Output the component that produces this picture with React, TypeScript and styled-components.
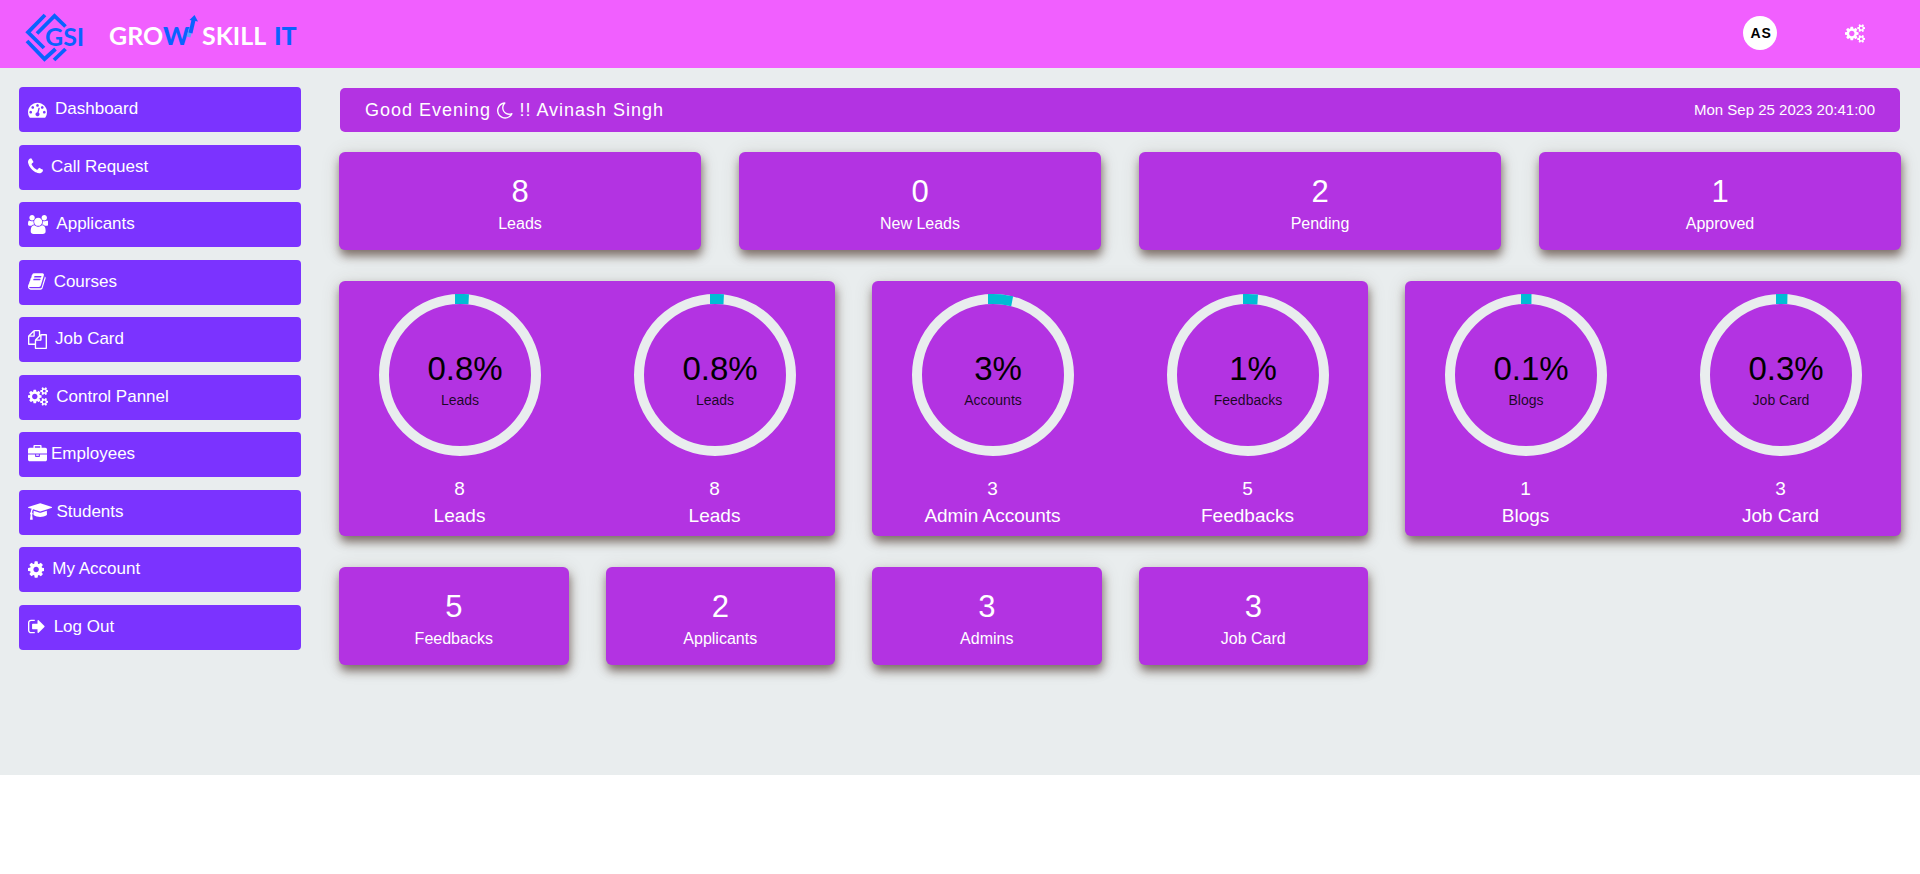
import React from "react";
import styled, { createGlobalStyle } from "styled-components";

const GlobalStyle = createGlobalStyle`
  * { box-sizing: border-box; }
  body {
    margin: 0;
    background: #fff;
    font-family: "Liberation Sans", Arial, sans-serif;
    color: #fff;
  }
`;

const glyphs = {
  dashboard: {
    box: "0 0 1792 1792",
    d: "M384 1152q0-53-37.5-90.5t-90.5-37.5-90.5 37.5-37.5 90.5 37.5 90.5 90.5 37.5 90.5-37.5 37.5-90.5zm192-448q0-53-37.5-90.5t-90.5-37.5-90.5 37.5-37.5 90.5 37.5 90.5 90.5 37.5 90.5-37.5 37.5-90.5zm428 481l101-382q6-26-7.5-48.5t-38.5-29.5-48 6.5-30 39.5l-101 382q-60 5-107 43.5t-63 98.5q-20 77 20 146t117 89 146-20 89-117q16-60-6-117t-72-91zm660-33q0-53-37.5-90.5t-90.5-37.5-90.5 37.5-37.5 90.5 37.5 90.5 90.5 37.5 90.5-37.5 37.5-90.5zm-640-640q0-53-37.5-90.5t-90.5-37.5-90.5 37.5-37.5 90.5 37.5 90.5 90.5 37.5 90.5-37.5 37.5-90.5zm448 192q0-53-37.5-90.5t-90.5-37.5-90.5 37.5-37.5 90.5 37.5 90.5 90.5 37.5 90.5-37.5 37.5-90.5zm320 448q0 261-141 483-19 29-54 29h-1402q-35 0-54-29-141-221-141-483 0-182 71-348t191-286 286-191 348-71 348 71 286 191 191 286 71 348z",
  },
  phone: {
    box: "192 0 1408 1792",
    d: "M1600 1240q0 27-10 70.5t-21 68.5q-21 50-122 106-94 51-186 51-27 0-52.5-3.5t-57.5-12.5-47.5-14.5-55.5-20.5-49-18q-98-35-175-83-128-79-264.5-215.5t-215.5-264.5q-48-77-83-175-3-9-18-49t-20.5-55.5-14.5-47.5-12.5-57.5-3.5-52.5q0-92 51-186 56-101 106-122 25-11 68.5-21t70.5-10q14 0 21 3 18 6 53 76 11 19 30 54t35 63.5 31 53.5q3 4 17.5 25t21.5 35.5 7 28.5q0 20-28.5 50t-62 55-62 53-28.5 46q0 9 5 22.5t8.5 20.5 14 24 11.5 19q76 137 174 235t235 174q2 1 19 11.5t24 14 20.5 8.5 22.5 5q18 0 46-28.5t53-62 55-62 50-28.5q14 0 28.5 7t35.5 21.5 25 17.5q25 15 53.5 31t63.5 35 54 30q70 35 76 53 3 7 3 21z",
  },
  users: {
    box: "0 0 1920 1792",
    d: "M593 896q-162 5-265 128h-134q-82 0-138-40.5t-56-118.5q0-353 124-353 6 0 43.5 21t97.5 42.5 119 21.5q67 0 133-23-5 37-5 66 0 139 81 256zm1071 637q0 120-73 189.5t-194 69.5h-874q-121 0-194-69.5t-73-189.5q0-53 3.5-103.5t14-109 26.5-108.5 43-97.5 62-81 85.5-53.5 111.5-20q10 0 43 21.5t73 48 107 48 135 21.5 135-21.5 107-48 73-48 43-21.5q61 0 111.5 20t85.5 53.5 62 81 43 97.5 26.5 108.5 14 109 3.5 103.5zm-1024-1277q0 106-75 181t-181 75-181-75-75-181 75-181 181-75 181 75 75 181zm704 384q0 159-112.5 271.5t-271.5 112.5-271.5-112.5-112.5-271.5 112.5-271.5 271.5-112.5 271.5 112.5 112.5 271.5zm576 225q0 78-56 118.5t-138 40.5h-134q-103-123-265-128 81-117 81-256 0-29-5-66 66 23 133 23 59 0 119-21.5t97.5-42.5 43.5-21q124 0 124 353zm-128-609q0 106-75 181t-181 75-181-75-75-181 75-181 181-75 181 75 75 181z",
  },
  book: {
    box: "64 0 1664 1792",
    d: "M1703 478q40 57 18 129l-275 906q-19 64-76.5 107.5t-122.5 43.5h-923q-77 0-148.5-53.5t-99.5-131.5q-24-67-2-127 0-4 3-27t4-37q1-8-3-21.5t-3-19.5q2-11 8-21t16.5-23.5 16.5-23.5q23-38 45-91.5t30-91.5q3-10 .5-30t-.5-28q3-11 17-28t17-23q21-36 42-92t25-90q1-9-2.5-32t.5-28q4-13 22-30.5t22-22.5q19-26 42.5-84.5t27.5-96.5q1-8-3-25.5t-2-26.5q2-8 9-18t18-23 17-21q8-12 16.5-30.5t15-35 16-36 19.5-32 26.5-23.5 36-11.5 47.5 5.5l-1 3q38-9 51-9h761q74 0 114 56t18 130l-274 906q-36 119-71.5 153.5t-128.5 34.5h-869q-27 0-38 15-11 16-1 43 24 70 144 70h923q29 0 56-15.5t35-41.5l300-987q7-22 5-57 38 15 59 43zm-1064 2q-4 13 2 22.5t20 9.5h608q13 0 25.5-9.5t16.5-22.5l21-64q4-13-2-22.5t-20-9.5h-608q-13 0-25.5 9.5t-16.5 22.5zm-83 256q-4 13 2 22.5t20 9.5h608q13 0 25.5-9.5t16.5-22.5l21-64q4-13-2-22.5t-20-9.5h-608q-13 0-25.5 9.5t-16.5 22.5z",
  },
  copy: {
    box: "0 0 1792 1792",
    d: "M1696 384q40 0 68 28t28 68v1216q0 40-28 68t-68 28h-960q-40 0-68-28t-28-68v-288h-544q-40 0-68-28t-28-68v-672q0-40 20-88t48-76l408-408q28-28 76-48t88-20h416q40 0 68 28t28 68v328q68-40 128-40h416zm-544 213l-299 299h299v-299zm-640-384l-299 299h299v-299zm196 647l316-316v-416h-384v416q0 40-28 68t-68 28h-416v640h512v-256q0-40 20-88t48-76zm956 804v-1152h-384v416q0 40-28 68t-68 28h-416v640h896z",
  },
  gears: {
    box: "0 0 1920 1792",
    d: "M896 896q0-106-75-181t-181-75-181 75-75 181 75 181 181 75 181-75 75-181zm768 512q0-52-38-90t-90-38-90 38-38 90q0 53 37.5 90.5t90.5 37.5 90.5-37.5 37.5-90.5zm0-1024q0-52-38-90t-90-38-90 38-38 90q0 53 37.5 90.5t90.5 37.5 90.5-37.5 37.5-90.5zm-384 421v185q0 10-7 19.5t-16 10.5l-155 24q-11 35-32 76 34 48 90 115 7 11 7 20 0 12-7 19-23 30-82.5 89.5t-78.5 59.5q-11 0-21-7l-115-90q-37 19-77 31-11 108-23 155-7 24-30 24h-186q-11 0-20-7.5t-10-17.5l-23-153q-34-10-75-31l-118 89q-7 7-20 7-11 0-21-8-144-133-144-160 0-9 7-19 10-14 41-53t47-61q-23-44-35-82l-152-24q-10-1-17-9.5t-7-19.5v-185q0-10 7-19.5t16-10.5l155-24q11-35 32-76-34-48-90-115-7-11-7-20 0-12 7-20 22-30 82-89t79-59q11 0 21 7l115 90q34-18 77-32 11-108 23-154 7-24 30-24h186q11 0 20 7.5t10 17.5l23 153q34 10 75 31l118-89q8-7 20-7 11 0 21 8 144 133 144 160 0 8-7 19-12 16-42 54t-45 60q23 48 34 82l152 23q10 2 17 10.5t7 19.5zm640 533v140q0 16-149 31-12 27-30 52 51 113 51 138 0 4-4 7-122 71-124 71-8 0-46-47t-52-68q-20 2-30 2t-30-2q-14 21-52 68t-46 47q-2 0-124-71-4-3-4-7 0-25 51-138-18-25-30-52-149-15-149-31v-140q0-16 149-31 13-29 30-52-51-113-51-138 0-4 4-7 4-2 35-20t59-34 30-16q8 0 46 46.5t52 67.5q20-2 30-2t30 2q51-71 92-112l6-2q4 0 124 70 4 3 4 7 0 25-51 138 17 23 30 52 149 15 149 31zm0-1024v140q0 16-149 31-12 27-30 52 51 113 51 138 0 4-4 7-122 71-124 71-8 0-46-47t-52-68q-20 2-30 2t-30-2q-14 21-52 68t-46 47q-2 0-124-71-4-3-4-7 0-25 51-138-18-25-30-52-149-15-149-31v-140q0-16 149-31 13-29 30-52-51-113-51-138 0-4 4-7 4-2 35-20t59-34 30-16q8 0 46 46.5t52 67.5q20-2 30-2t30 2q51-71 92-112l6-2q4 0 124 70 4 3 4 7 0 25-51 138 17 23 30 52 149 15 149 31z",
  },
  briefcase: {
    box: "0 0 1792 1792",
    d: "M640 256h512v-128h-512v128zm1152 640v480q0 66-47 113t-113 47h-1472q-66 0-113-47t-47-113v-480h672v160q0 26 19 45t45 19h320q26 0 45-19t19-45v-160h672zm-768 0v128h-256v-128h256zm768-480v384h-1792v-384q0-66 47-113t113-47h352v-160q0-40 28-68t68-28h576q40 0 68 28t28 68v160h352q66 0 113 47t47 113z",
  },
  graduation: {
    box: "0 0 2304 1792",
    d: "M1774 836l18 316q4 69-82 128t-235 93.5-323 34.5-323-34.5-235-93.5-82-128l18-316 574 181q22 7 48 7t48-7zm530-324q0 23-22 31l-1120 352q-4 1-10 1t-10-1l-652-206q-43 34-71 111.5t-34 178.5q63 36 63 109 0 69-58 107l58 433q2 14-8 25-9 11-24 11h-192q-15 0-24-11-10-11-8-25l58-433q-58-38-58-107 0-73 65-111 11-207 98-330l-333-104q-22-8-22-31t22-31l1120-352q4-1 10-1t10 1l1120 352q22 8 22 31z",
  },
  gear: {
    box: "128 0 1536 1792",
    d: "M1152 896q0-106-75-181t-181-75-181 75-75 181 75 181 181 75 181-75 75-181zm512-109v222q0 12-8 23t-20 13l-185 28q-19 54-39 91 35 50 107 138 10 12 10 25t-9 23q-27 37-99 108t-94 71q-12 0-26-9l-138-108q-44 23-91 38-16 136-29 186-7 28-36 28h-222q-14 0-24.5-8.5t-11.5-21.5l-28-184q-49-16-90-37l-141 107q-10 9-25 9-14 0-25-11-126-114-165-168-7-10-7-23 0-12 8-23 15-21 51-66.5t54-70.5q-27-50-41-99l-183-27q-13-2-21-12.5t-8-23.5v-222q0-12 8-23t19-13l186-28q14-46 39-92-40-57-107-138-10-12-10-24 0-10 9-23 26-36 98.5-107.5t94.5-71.5q13 0 26 10l138 107q44-23 91-38 16-136 29-186 7-28 36-28h222q14 0 24.5 8.5t11.5 21.5l28 184q49 16 90 37l142-107q9-9 24-9 13 0 25 10 129 119 165 170 7 8 7 22 0 12-8 23-15 21-51 66.5t-54 70.5q26 50 41 98l183 28q13 2 21 12.5t8 23.5z",
  },
  signOut: {
    box: "64 0 1664 1792",
    d: "M704 1440q0 4 1 20t.5 26.5-3 23.5-10 19.5-20.5 6.5h-320q-119 0-203.5-84.5t-84.5-203.5v-704q0-119 84.5-203.5t203.5-84.5h320q13 0 22.5 9.5t9.5 22.5q0 4 1 20t.5 26.5-3 23.5-10 19.5-20.5 6.5h-320q-66 0-113 47t-47 113v704q0 66 47 113t113 47h312l11.5 1 11.5 3 8 5.5 7 9 2 13.5zm928-544q0 26-19 45l-544 544q-19 19-45 19t-45-19-19-45v-288h-448q-26 0-45-19t-19-45v-384q0-26 19-45t45-19h448v-288q0-26 19-45t45-19 45 19l544 544q19 19 19 45z",
  },
  moon: {
    box: "128 0 1536 1792",
    d: "M1390 1303q-54 9-110 9-182 0-337-90t-245-245-90-337q0-192 104-357-201 60-328.5 229t-127.5 384q0 130 51 248.5t136.5 204 204 136.5 248.5 51q144 0 273.5-61.5t220.5-171.5zm203-85q-94 203-283.5 324.5t-413.5 121.5q-156 0-298-61t-245-164-164-245-61-298q0-153 57.5-292.5t156-241.5 235.5-164.5 290-68.5q44-2 61 39 18 41-15 72-86 78-131.5 181.5t-45.5 218.5q0 148 73 273t198 198 273 73q118 0 228-51 41-18 72 13 14 14 17.5 34t-4.5 38z",
  },
};

type GlyphName = keyof typeof glyphs;

const GlyphSvg = styled.svg`
  display: block;
  flex: none;
  height: 19px;
  fill: currentColor;
`;

function Glyph({ name }: { name: GlyphName }) {
  return (
    <GlyphSvg viewBox={glyphs[name].box} aria-hidden="true">
      <path d={glyphs[name].d} />
    </GlyphSvg>
  );
}

const Page = styled.div`
  background: #e9edee;
`;

const Header = styled.header`
  display: flex;
  align-items: center;
  justify-content: space-between;
  height: 68px;
  padding: 0 55px 0 20px;
  background: #f15fff;
`;

const Brand = styled.a`
  display: block;
  line-height: 0;
`;

const LogoText = styled.text<{ $weight?: number }>`
  font-family: Lato, sans-serif;
  font-size: 25px;
  font-weight: ${(p) => p.$weight ?? 700};
`;

const HeaderTools = styled.div`
  display: flex;
  align-items: center;
  gap: 68px;
  padding-bottom: 2px;
`;

const Avatar = styled.button`
  width: 34px;
  height: 34px;
  padding: 0 0 0 3px;
  border: 0;
  border-radius: 50%;
  background: #fff;
  color: #000;
  font: bold 14px "Liberation Sans", Arial, sans-serif;
  letter-spacing: 1px;
`;

const IconButton = styled.button`
  padding: 0;
  border: 0;
  background: none;
  color: #fff;
`;

const Layout = styled.div`
  display: grid;
  grid-template-columns: 282px 1fr;
  gap: 38px;
  padding: 19px 19px 110px;
`;

const Sidebar = styled.nav`
  display: flex;
  flex-direction: column;
  justify-content: space-between;
  align-self: start;
  min-height: 563px;
`;

const NavLink = styled.a<{ $tight?: boolean }>`
  display: flex;
  align-items: center;
  gap: ${(p) => (p.$tight ? 4 : 8)}px;
  height: 45px;
  padding: 0 9px 1px;
  border-radius: 4px;
  background: #7b33ff;
  color: #fff;
  font-size: 17px;
  text-decoration: none;
`;

const Main = styled.main`
  display: flex;
  flex-direction: column;
  gap: 31px;
  min-width: 0;
`;

const Top = styled.div`
  display: flex;
  flex-direction: column;
  gap: 20px;
`;

const Banner = styled.section`
  display: flex;
  align-items: center;
  justify-content: space-between;
  height: 44px;
  margin: 1px 1px 0;
  padding: 0 25px 2px;
  border-radius: 5px;
  background: #b333e2;
`;

const Greeting = styled.h1`
  display: flex;
  align-items: center;
  gap: 6px;
  margin: 0;
  padding-top: 2px;
  font-size: 18px;
  font-weight: 400;
  letter-spacing: 1px;
`;

const Clock = styled.time`
  font-size: 15px;
`;

const CardRow = styled.section<{ $columns: number; $gap?: number }>`
  display: grid;
  grid-template-columns: repeat(${(p) => p.$columns}, 1fr);
  gap: ${(p) => p.$gap ?? 37}px;
`;

const Card = styled.article`
  border-radius: 6px;
  background: #b333e2;
  box-shadow: 1px 6px 10px rgba(70, 45, 35, 0.62), 0 2px 20px rgba(70, 60, 40, 0.12);
  text-align: center;
`;

const StatCard = styled(Card)`
  padding: 22px 16px 16px;
`;

const StatValue = styled.div`
  font-size: 31px;
  line-height: 36px;
`;

const StatLabel = styled.div`
  padding-top: 4px;
  font-size: 16px;
  line-height: 20px;
`;

const GaugeCard = styled(Card)`
  display: grid;
  grid-template-columns: 1fr 1fr;
  gap: 38px;
  padding: 13px 12px 7px;
`;

const GaugeChart = styled.svg`
  display: block;
  width: 162px;
  height: 162px;
  margin: 0 auto 19px;
`;

const GaugePercent = styled.text`
  font-size: 33px;
  fill: #000;
`;

const GaugeName = styled.text`
  font-size: 14px;
  fill: #000;
  fill-opacity: 0.85;
`;

const GaugeCaption = styled.div`
  font-size: 19px;
  line-height: 27px;
`;

interface Stat {
  value: number;
  label: string;
}

interface GaugeData extends Stat {
  percent: number;
  name: string;
}

const navItems: { icon: GlyphName; label: string; tight?: boolean }[] = [
  { icon: "dashboard", label: "Dashboard" },
  { icon: "phone", label: "Call Request" },
  { icon: "users", label: "Applicants" },
  { icon: "book", label: "Courses" },
  { icon: "copy", label: "Job Card" },
  { icon: "gears", label: "Control Pannel" },
  { icon: "briefcase", label: "Employees", tight: true },
  { icon: "graduation", label: "Students", tight: true },
  { icon: "gear", label: "My Account" },
  { icon: "signOut", label: "Log Out" },
];

const leadStats: Stat[] = [
  { value: 8, label: "Leads" },
  { value: 0, label: "New Leads" },
  { value: 2, label: "Pending" },
  { value: 1, label: "Approved" },
];

const gaugeGroups: GaugeData[][] = [
  [
    { percent: 0.8, name: "Leads", value: 8, label: "Leads" },
    { percent: 0.8, name: "Leads", value: 8, label: "Leads" },
  ],
  [
    { percent: 3, name: "Accounts", value: 3, label: "Admin Accounts" },
    { percent: 1, name: "Feedbacks", value: 5, label: "Feedbacks" },
  ],
  [
    { percent: 0.1, name: "Blogs", value: 1, label: "Blogs" },
    { percent: 0.3, name: "Job Card", value: 3, label: "Job Card" },
  ],
];

const totals: Stat[] = [
  { value: 5, label: "Feedbacks" },
  { value: 2, label: "Applicants" },
  { value: 3, label: "Admins" },
  { value: 3, label: "Job Card" },
];

function Logo() {
  return (
    <svg width="282" height="68" viewBox="20 0 282 68" role="img" aria-label="Grow Skill IT">
      <g fill="none" stroke="#0a62ff" strokeWidth="3.8">
        <path d="M45 15 L28 32.300 L44 48" />
        <path d="M37 33.500 L54.500 16 L65.500 26.500" />
        <path d="M27 41 L44.500 59 L55.500 49" />
        <path d="M54 60 L65.500 49" />
      </g>
      <LogoText x="45" y="46" fill="#0a62ff">GSI</LogoText>
      <LogoText x="109" y="45" fill="#fff">GRO</LogoText>
      <LogoText $weight={900} x="163" y="45" fill="#0a62ff">W</LogoText>
      <path d="M188.500 37 L191 28" stroke="#5aa6ff" strokeWidth="4" />
      <path d="M190.500 33 L193.500 20" stroke="#0a62ff" strokeWidth="4" />
      <path d="M189.500 20 L194.500 15 L198 21.500 Z" fill="#0a62ff" />
      <LogoText x="202" y="45" fill="#fff">SKILL</LogoText>
      <LogoText $weight={900} x="274" y="45" fill="#0a62ff">IT</LogoText>
    </svg>
  );
}

const RADIUS = 76;
const LENGTH = 2 * Math.PI * RADIUS;

function Gauge({ percent, name, value, label }: GaugeData) {
  const filled = (LENGTH * percent) / 100;
  return (
    <div>
      <GaugeChart viewBox="0 0 162 162" role="img" aria-label={`${name} ${percent}%`}>
        <circle cx="81" cy="81" r={RADIUS} fill="none" stroke="#e9edee" strokeWidth="10" />
        <circle
          cx="81"
          cy="81"
          r={RADIUS}
          fill="none"
          stroke="#00bcd4"
          strokeWidth="10"
          strokeLinecap="square"
          strokeDasharray={`${filled} ${LENGTH}`}
          transform="rotate(-90 81 81)"
        />
        <GaugePercent x="86" y="86" textAnchor="middle">{percent}%</GaugePercent>
        <GaugeName x="81" y="111" textAnchor="middle">{name}</GaugeName>
      </GaugeChart>
      <GaugeCaption>{value}</GaugeCaption>
      <GaugeCaption>{label}</GaugeCaption>
    </div>
  );
}

function StatTile({ value, label }: Stat) {
  return (
    <StatCard>
      <StatValue>{value}</StatValue>
      <StatLabel>{label}</StatLabel>
    </StatCard>
  );
}

export default function App() {
  return (
    <Page>
      <GlobalStyle />
      <Header>
        <Brand href="#">
          <Logo />
        </Brand>
        <HeaderTools>
          <Avatar type="button" aria-label="AS profile">AS</Avatar>
          <IconButton type="button" aria-label="Settings">
            <Glyph name="gears" />
          </IconButton>
        </HeaderTools>
      </Header>
      <Layout>
        <Sidebar>
          {navItems.map((item) => (
            <NavLink key={item.label} href="#" $tight={item.tight}>
              <Glyph name={item.icon} />
              {item.label}
            </NavLink>
          ))}
        </Sidebar>
        <Main>
          <Top>
            <Banner>
              <Greeting>
                <span>Good Evening</span>
                <Glyph name="moon" />
                <span>!! Avinash Singh</span>
              </Greeting>
              <Clock dateTime="2023-09-25T20:41:00">Mon Sep 25 2023 20:41:00</Clock>
            </Banner>
            <CardRow $columns={4} $gap={38}>
              {leadStats.map((stat) => (
                <StatTile key={stat.label} {...stat} />
              ))}
            </CardRow>
          </Top>
          <CardRow $columns={3}>
            {gaugeGroups.map((group, i) => (
              <GaugeCard key={i}>
                {group.map((gauge, j) => (
                  <Gauge key={j} {...gauge} />
                ))}
              </GaugeCard>
            ))}
          </CardRow>
          <CardRow $columns={6}>
            {totals.map((stat) => (
              <StatTile key={stat.label} {...stat} />
            ))}
          </CardRow>
        </Main>
      </Layout>
    </Page>
  );
}
